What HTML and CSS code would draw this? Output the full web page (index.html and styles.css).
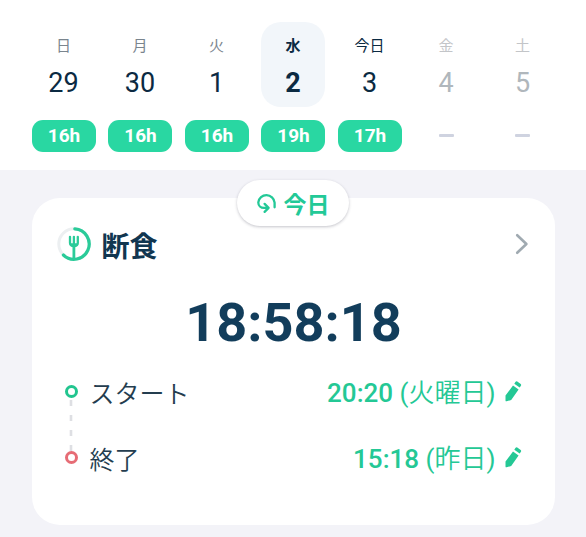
FILE: index.html
```html
<!DOCTYPE html>
<html lang="ja">
<head>
<meta charset="utf-8">
<title>断食</title>
<link rel="stylesheet" href="styles.css">
</head>
<body>
<header class="week">
  <div class="day"><div class="date"><span class="name">日</span><span class="num">29</span></div><span class="hours">16h</span></div>
  <div class="day"><div class="date"><span class="name">月</span><span class="num">30</span></div><span class="hours">16h</span></div>
  <div class="day"><div class="date"><span class="name">火</span><span class="num">1</span></div><span class="hours">16h</span></div>
  <div class="day selected"><div class="date"><span class="name">水</span><span class="num">2</span></div><span class="hours">19h</span></div>
  <div class="day today"><div class="date"><span class="name">今日</span><span class="num">3</span></div><span class="hours">17h</span></div>
  <div class="day future"><div class="date"><span class="name">金</span><span class="num">4</span></div><span class="none"></span></div>
  <div class="day future"><div class="date"><span class="name">土</span><span class="num">5</span></div><span class="none"></span></div>
</header>
<main class="content">
  <section class="card">
    <button class="jump">
      <svg class="jump-icon" width="20" height="22" viewBox="0 0 20 22"><path d="M17.6 15.3V10.6A8.2 8.2 0 0 0 1.3 10.4C1.3 13.6 3.8 15.9 7 15.9H11.2M7.6 11.9L11.6 15.9L7.6 19.9"/></svg>
      <span>今日</span>
    </button>
    <div class="head">
      <svg class="fork" width="34" height="34" viewBox="0 0 34 34">
        <circle class="track" cx="17" cy="17" r="15.2"/>
        <path class="arc" d="M17.8 1.9A15.2 15.2 0 1 1 6.4 28"/>
        <path class="tines" d="M13 9.8V16Q13 19 16.9 19Q20.8 19 20.8 16V9.8M16.9 9.8V18"/>
        <path class="handle" d="M14.6 17.6H19.2M16.9 18V31"/>
      </svg>
      <h1>断食</h1>
      <svg class="chevron" width="14" height="22" viewBox="0 0 14 22"><path d="M2.2 2.2L11.4 11L2.2 19.8"/></svg>
    </div>
    <div class="timer">18:58:18</div>
    <div class="times">
      <div class="rail"><i class="dot start"></i><svg class="dashes" width="4" height="53" viewBox="0 0 4 53"><path d="M2 2V53"/></svg><i class="dot end"></i></div>
      <div class="rows">
        <div class="row"><span class="label">スタート</span><span class="time">20:20 <span class="when">(<span class="cjk">火曜日</span>)</span></span><svg class="pencil" width="18" height="22" viewBox="0 0 18 22"><path d="M9 5.5L14.6 9.6L7.2 20L2.6 21.3Q1.5 21.4 1.5 20.4V15.5ZM10.3 3.7L11.6 1.8Q12.3 .9 13.3 1.6L16.7 4.1Q17.5 4.8 16.9 5.8L15.7 7.6Z"/></svg></div>
        <div class="row"><span class="label">終了</span><span class="time">15:18 <span class="when">(<span class="cjk">昨日</span>)</span></span><svg class="pencil" width="18" height="22" viewBox="0 0 18 22"><path d="M9 5.5L14.6 9.6L7.2 20L2.6 21.3Q1.5 21.4 1.5 20.4V15.5ZM10.3 3.7L11.6 1.8Q12.3 .9 13.3 1.6L16.7 4.1Q17.5 4.8 16.9 5.8L15.7 7.6Z"/></svg></div>
      </div>
    </div>
  </section>
</main>
</body>
</html>
```
FILE: styles.css
```css
* { box-sizing: border-box; }
body {
  margin: 0;
  height: 537px;
  overflow: hidden;
  display: flex;
  flex-direction: column;
  background: #f3f3f8;
  color: #0b2a42;
  font-family: Roboto, "Noto Sans CJK JP", sans-serif;
}
svg { flex: none; fill: none; stroke-linecap: round; stroke-linejoin: round; }

.week {
  height: 170px;
  padding: 22px 31px 0 31.5px;
  display: grid;
  grid-template-columns: repeat(7, 64px);
  column-gap: 12.5px;
  align-content: start;
  background: #fff;
}
.day { display: flex; flex-direction: column; align-items: center; gap: 13px; }
.date {
  width: 64px;
  height: 85px;
  padding-top: 14px;
  border-radius: 20px;
  display: flex;
  flex-direction: column;
  align-items: center;
}
.name { font-size: 15px; line-height: 20px; color: #7a858e; }
.num { margin-top: 12px; font-size: 27px; line-height: 30px; }
.selected .date { background: #f2f6fa; }
.selected .name, .selected .num { font-weight: 700; color: #0b2a42; }
.today .name { color: #0b2a42; }
.future .name { color: #c3c5c8; }
.future .num { color: #b0b7bc; }
.hours {
  width: 64px;
  height: 32px;
  padding-left: 1px;
  border-radius: 11px;
  background: #29d7a2;
  color: #fff;
  font-size: 19px;
  font-weight: 700;
  line-height: 32px;
  text-align: center;
}
.none { width: 15px; height: 3px; margin-top: 14px; border-radius: 1px; background: #cfd3e0; }

.content { padding: 28px 31.5px 0; }
.card {
  position: relative;
  height: 327px;
  padding: 29px 26px 0 25px;
  border-radius: 28px;
  background: #fff;
}
.jump {
  position: absolute;
  top: -18px;
  left: 50%;
  width: 112px;
  height: 46px;
  margin-left: -56px;
  padding: 0;
  border: 0;
  border-radius: 23px;
  display: flex;
  align-items: center;
  justify-content: center;
  gap: 7px;
  background: #fff;
  box-shadow: 0 1px 3px rgba(60, 60, 80, .3);
  color: #23c997;
  font: 700 23px/34px "Noto Sans CJK JP", sans-serif;
}
.jump-icon { stroke: #23c997; stroke-width: 2.3; }
.head { display: flex; align-items: center; height: 34px; }
.track { stroke: #eceff1; stroke-width: 3; }
.arc { stroke: #2acb99; stroke-width: 3.2; }
.tines { stroke: #2acb99; stroke-width: 2.3; }
.handle { stroke: #2acb99; stroke-width: 2.8; }
h1 { margin: 2px auto 0 11px; font: 700 28px/34px "Noto Sans CJK JP", sans-serif; color: #113650; }
.chevron { stroke: #a0aab1; stroke-width: 2.6; }
.timer {
  margin-top: 30px;
  padding-left: 2px;
  font-size: 54px;
  font-weight: 700;
  line-height: 64px;
  text-align: center;
  color: #123d5b;
}
.times { display: flex; margin-top: 19px; padding-left: 8px; }
.rail { width: 13px; padding-top: 11px; display: flex; flex-direction: column; align-items: center; }
.dot { width: 13px; height: 13px; border: 3px solid #22c58f; border-radius: 50%; }
.dot.end { border-color: #e66c75; }
.dashes path { stroke: #dedfe3; stroke-width: 2.6; stroke-linecap: butt; stroke-dasharray: 6 9; }
.rows { flex: 1; margin-left: 12px; display: flex; flex-direction: column; gap: 30px; }
.row { display: flex; align-items: center; height: 36px; padding-right: 7px; }
.label { margin-right: auto; font: 350 25px/36px "Noto Sans CJK JP", sans-serif; color: #243d4f; }
.time { padding-top: 2px; font-size: 26px; font-weight: 500; line-height: 36px; color: #24c895; }
.when { font-weight: 400; }
.cjk { font-weight: 350; }
.pencil { margin: 0 0 2px 8px; fill: #24c895; }
```
